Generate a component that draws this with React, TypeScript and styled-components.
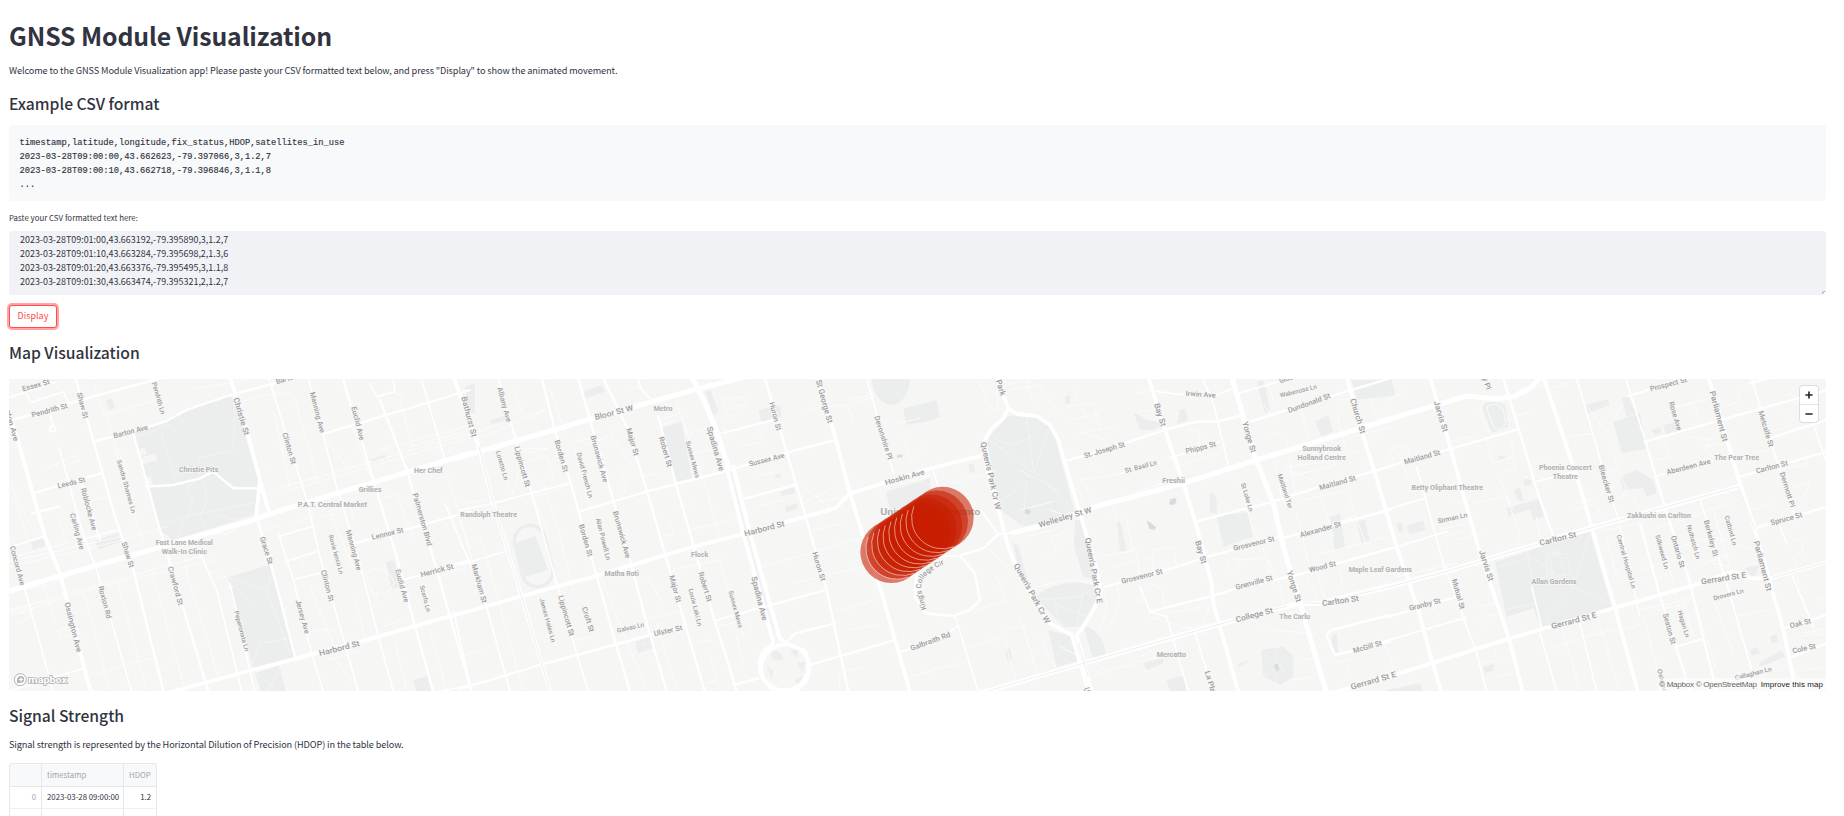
import React from "react";
import styled, { createGlobalStyle } from "styled-components";

const GlobalStyle = createGlobalStyle`
  * { box-sizing: border-box; }
  body {
    margin: 0;
    background: #fff;
    color: #31333f;
    font-family: "Noto Sans CJK SC", "Open Sans", sans-serif;
    overflow: hidden;
  }
`;

const Page = styled.main`
  height: 816px;
  padding: 17px 18px 0 9px;
  overflow: hidden;
`;

const Title = styled.h1`
  margin: 0;
  height: 36px;
  line-height: 36px;
  font-size: 24.8px;
  font-weight: 700;
  letter-spacing: -0.1px;
  white-space: nowrap;
`;

const Text = styled.p<{ $top: number }>`
  margin: ${(p) => p.$top}px 0 0;
  height: 17px;
  line-height: 17px;
  font-size: 9.2px;
  letter-spacing: -0.12px;
  white-space: nowrap;
`;

const Heading = styled.h3`
  margin: 13px 0 0;
  height: 22px;
  line-height: 24px;
  font-size: 15.7px;
  font-weight: 500;
  letter-spacing: -0.02px;
  white-space: nowrap;
`;

const CodeBlock = styled.pre`
  margin: 11px 0 0;
  height: 76px;
  padding: 11px 10.5px 0;
  border-radius: 3px;
  background: #f8f9fb;
  font: 8.74px/14px "Liberation Mono", monospace;
  -webkit-text-stroke: 0.15px #31333f;
`;

const FieldLabel = styled.label`
  display: block;
  margin-top: 8px;
  height: 17px;
  font-size: 7.9px;
  line-height: 17px;
`;

const CsvField = styled.div`
  position: relative;
  margin-top: 5px;
  height: 64px;
  padding: 2px 11px 0;
  border-radius: 3px;
  background: #f0f2f6;
  font-size: 8.95px;
  line-height: 14px;
  white-space: pre;
`;

const ResizeGrip = styled.i`
  position: absolute;
  right: 1px;
  bottom: 1px;
  width: 3px;
  height: 3px;
  background: linear-gradient(135deg, #d8d8d8 40%, #a8a8a8 40% 60%, #fff 60%);
`;

const DisplayButton = styled.button`
  display: block;
  margin-top: 10px;
  width: 48px;
  height: 23px;
  padding: 0 0 2px;
  border: 1px solid #ff4b4b;
  border-radius: 3px;
  background: #fff;
  box-shadow: 0 0 0 2px rgba(255, 75, 75, 0.5);
  color: #ff4b4b;
  font: 9px/19px "Noto Sans CJK SC", sans-serif;
`;

const MapFrame = styled.section`
  position: relative;
  margin-top: 16px;
  height: 312px;
  background: #f6f6f5;
  overflow: hidden;
`;

const MapCanvas = styled.svg`
  display: block;
  width: 1817px;
  height: 312px;
`;

const ZoomControl = styled.div`
  position: absolute;
  top: 7px;
  right: 8px;
  width: 18px;
  height: 36px;
  border-radius: 3px;
  background: #fff;
  box-shadow: 0 0 0 1px rgba(0, 0, 0, 0.1);
`;

const ZoomButton = styled.div<{ $divided?: boolean }>`
  display: flex;
  align-items: center;
  justify-content: center;
  height: 18px;
  border-top: ${(p) => (p.$divided ? "1px solid #e3e3e3" : "0")};
`;

const Attribution = styled.div`
  position: absolute;
  right: 0;
  bottom: 0;
  width: 168px;
  height: 13px;
  padding-right: 3px;
  display: flex;
  justify-content: flex-end;
  gap: 4px;
  background: rgba(255, 255, 255, 0.5);
  color: #666;
  font: 8px/13px "Liberation Sans", sans-serif;
  letter-spacing: -0.24px;
  white-space: nowrap;
`;

const Improve = styled.span`
  color: #222;
  letter-spacing: 0.06px;
`;

const Table = styled.div`
  display: grid;
  grid-template-columns: 32px 82px 32px;
  grid-template-rows: 23px 22px 22px;
  width: 148px;
  margin-top: 10px;
  border: 1px solid #e6e7ea;
  border-bottom: 0;
  border-radius: 3px 3px 0 0;
  overflow: hidden;
`;

const Cell = styled.div<{ $head?: boolean; $muted?: boolean; $right?: boolean; $last?: boolean }>`
  padding: 0 5px;
  border-right: ${(p) => (p.$last ? "0" : "1px solid #e6e7ea")};
  border-bottom: 1px solid ${(p) => (p.$head ? "#e6e7ea" : "#eff0f2")};
  background: ${(p) => (p.$head ? "#f8f9fb" : "#fff")};
  color: ${(p) => (p.$muted ? "#a3a5ad" : "#31333f")};
  font-size: 7.8px;
  line-height: ${(p) => (p.$head ? 22 : 20)}px;
  text-align: ${(p) => (p.$right ? "right" : "left")};
  white-space: nowrap;
`;

type Label = [string, number, number, number, number, number?];
type Tile = {
  parks: string;
  blocks?: string;
  lanes: string;
  minor: string;
  medium: string;
  major: string;
  wide: string;
  tracks?: string;
  trails?: string;
  labels: Label[];
  places: [string, number, number, number, number?][];
};

const tiles: Tile[] = [
  {
    parks:
      "M400 190L500 155L560 120L690 80L708 92L745 230L775 330L765 435L520 510L480 480ZM685 622L808 585L885 860L760 895ZM765 910L838 887L858 970H785ZM285 512L355 488L365 515L295 537ZM1158 577L1182 570L1205 648L1175 657ZM1240 930L1280 918L1295 965H1248ZM90 515L133 505L136 528L100 540ZM318 90L335 85L345 115L328 120ZM1110 270L1155 253L1158 264L1115 278Z",
    trails:
      "M405 200L470 180L500 160L540 190M485 190L530 340M595 265L700 240L705 90M440 350L520 345L600 325L640 305L700 350L775 355M595 265L600 325L560 350L580 400L530 500M600 325Q640 380 600 440L620 480M480 460L600 430L760 400M640 430L700 450L765 435M690 625L800 660L820 590M690 625L750 700M800 660L870 850M750 900L780 820L870 805M770 910L830 960M840 890L800 970",
    blocks: "M410 240l25-8 5 20-25 8zM415 265l50-15 8 20-50 15zM430 325l22-8 8 32-20 5z",
    lanes:
      "M30 720L600 560M30 735L300 650L640 570M840 355L1410 190M845 367L1410 203M30 575L360 500M30 590L350 515L500 470M40 560L280 500M30 330L85 510M100 480L35 350M130 300L230 255L238 272L205 280M175 445L205 530M250 395L325 380M325 380L345 430M280 40L380 310M340 220L430 525M320 135L470 90M585 55L740 30M700 100L820 70L880 70L950 320M820 120L870 350M770 300L800 285M850 350L950 320M980 210L1060 320M1060 175L1110 320M1140 240L1410 165M1230 230L1410 180M1180 60Q1215 80 1200 100L1240 230M990 430L1060 590M985 425L1050 405L1060 440M880 460L940 440L935 425M960 440L1020 430M890 480L870 460M900 560L908 590M1145 385L1190 375L1240 500M1095 610Q1150 570 1185 640L1160 670L1120 670ZM1115 710L1130 700L1130 670M930 650L1010 850M940 780L1000 780M1065 690L1100 820M1150 770L1230 740M1270 640L1300 740M1340 310L1410 540M1320 620L1400 590M250 660L330 960M350 625L440 960M455 600L555 960M555 590L655 920M610 610L660 600M630 635L675 620M650 670L700 650M30 725L110 700M45 760L100 740M60 730L100 715M130 640L165 760M175 780L220 765L240 790L180 805ZM75 660L180 635M270 915L470 860L490 960M770 490L830 470M680 490L710 475M650 490Q690 500 705 480M985 870L1075 845M1000 860L1075 965M1180 800L1220 960M1290 780L1340 960",
    minor:
      "M178 235L245 480L290 600L370 880L395 965M245 340L300 510M25 515L75 660L160 965M600 550L650 660L710 900L725 965M690 640L765 965M805 20L920 390L960 560L1000 700L1075 965M925 25L1010 350L1075 560L1135 800L1180 965M835 490L880 630L935 850L970 965M30 82L170 35M835 500L935 470M855 575L950 545M880 630L965 607M35 530L130 500M30 962L250 895M80 70L90 98L190 65L205 100M150 130L158 165M1320 965L1410 945M245 510L350 480M1110 40L1130 80L1185 65L1180 30M1265 30L1335 270",
    medium:
      "M225 20L345 440L400 600L490 965M30 152L270 82L480 25M285 213L400 185L495 155L560 120L690 75L900 20M105 368L305 310M400 190L480 480L510 580L625 965M1030 30L1120 330L1190 560L1245 770L1300 965M1140 90L1220 300L1290 530L1350 740L1415 965M770 440L815 590L885 860M975 190L1410 60M1065 520L1410 425M1210 630L1410 570M440 350L520 345L600 325L640 305L700 355L775 355M95 430L178 410",
    major: "M20 110L55 215L135 500L180 610L262 930L275 970M690 20L745 200L780 330L808 430M780 330L768 440M510 967L700 915L880 868L1080 815L1410 722",
    wide: "M0 672L180 618L760 450L830 425L1410 250",
    labels: [
      ["Essex St", 67, 57, 148, 34], ["Pendrith St", 95, 135, 202, 106], ["Shaw St", 238, 68, 258, 145],
      ["Pendrith Ln", 462, 37, 490, 132, 20], ["Barton Ave", 340, 197, 443, 171], ["Christie St", 708, 83, 741, 195, 24],
      ["Ossington Ave", 6, 55, 49, 213], ["Leeds St", 173, 348, 255, 328], ["Roblocke Ave", 250, 354, 284, 480],
      ["Carling Ave", 217, 430, 247, 538], ["Sandra Shames Ln", 357, 270, 402, 429, 19], ["Clinton St", 854, 188, 882, 282],
      ["Manning Ave", 937, 66, 968, 188], ["Euclid Ave", 1061, 110, 1087, 210], ["Barton Ave", 828, 35, 930, 5],
      ["Concord Ave", 37, 528, 68, 645], ["Shaw St", 372, 516, 396, 592], ["Crawford St", 511, 590, 543, 705],
      ["Roxton Rd", 302, 648, 328, 745], ["Ossington Ave", 201, 697, 238, 846, 23], ["Peperonata Ln", 709, 723, 741, 843, 19],
      ["Grace St", 787, 500, 812, 582], ["Jersey Ave", 894, 690, 922, 790], ["Clinton St", 970, 600, 995, 694],
      ["Rosie Ienco Ln", 992, 495, 1025, 612, 19], ["Manning Ave", 1045, 480, 1078, 600], ["Lennox St", 1115, 502, 1210, 479],
      ["Palmerston Blvd", 1245, 370, 1290, 527], ["Herrick St", 1262, 614, 1360, 588], ["Euclid Ave", 1193, 598, 1220, 696],
      ["Scarfo Ln", 1266, 646, 1286, 725, 19], ["Harbord St", 957, 850, 1078, 819, 24],
    ],
    places: [["Christie Pits", 596, 298, 118], ["Her Chef", 1285, 303, 86], ["Grillies", 1110, 358, 68], ["P.A.T. Central Market", 997, 405, 208], ["Fast Lane Medical", 553, 519, 172], ["Walk-In Clinic", 553, 546, 136]],
  },
  {
    parks:
      "M605 175L665 155L695 325L645 335ZM370 65L425 45L435 65L375 85ZM1235 27H1350Q1345 100 1290 105Q1240 90 1235 27ZM1330 115L1415 95V150L1340 165ZM895 120L930 112L960 105L965 140L905 160ZM735 65L752 60L775 125L760 135ZM960 365L1000 352L1005 370L965 378ZM975 410L1010 400L1015 415L980 427ZM1278 365L1410 325V400L1290 420ZM165 520L225 497L265 600L195 620ZM525 815L570 800L578 835L535 850ZM15 50L45 40L45 130L30 130ZM90 150L145 135L148 148L95 163ZM945 315l15-5 3 10-15 5zM930 850Q960 830 970 870L940 870ZM990 840L1015 835L1010 865ZM1010 880L1035 875L1030 910ZM920 890L940 900L935 930ZM1005 930L1030 915L1015 950Z",
    trails: "M535 825L575 815M550 805L560 842",
    blocks: "",
    lanes:
      "M45 210L260 120M40 190L115 165M195 235L260 235M205 250L300 225M205 275L260 258L280 320M235 220L230 180M250 340L300 500L340 660M160 180L195 250M210 380L260 370L325 345M215 370L265 490L255 550L285 640M340 230L430 540M370 230L420 210L470 180M340 215L390 205M480 300L500 350L490 380M455 200L520 290L500 310M540 320L600 310M600 500L640 490L630 460M595 150L660 130M605 165L650 150M650 100L740 360L780 510M690 190L770 165M700 250L790 230M650 410L690 400M690 480L810 450M640 600L780 570M560 620L610 700M570 745L660 725M590 760L650 960M700 820L750 810M735 940L770 930M750 850L780 960M850 890L830 800L875 780L860 750L770 770M780 580L850 800M790 90L850 80L860 100L800 120ZM790 140L840 130M760 210L800 200L790 170M890 320L960 300M890 410L970 390M840 230L910 215L890 170M900 640L880 660M905 590L960 575L1055 548L1200 505M1000 640L1290 570M1150 720L1240 690M1060 400L1150 380M1030 400L1130 350M1030 350L1120 420M1060 480L1150 460M1030 130L1060 115L1155 105Q1170 110 1180 150M1170 90L1240 70M1180 100L1240 80M1310 160L1400 140M1400 230L1350 270L1330 200M1320 340L1410 320M1240 650L1410 600M1140 965L1135 910L1210 890M1170 780L1250 765M1350 920L1410 905M180 290L160 370L140 330M20 400L80 390M0 450L110 820L150 960M120 710L190 960M240 690L290 830M400 800L350 810M0 860L60 840M420 620L560 960M60 500L120 700M270 60L320 200M500 60L540 50M160 60L190 140L260 120",
    minor:
      "M-45 400L45 620L80 710L150 965M115 25L170 220L215 370L290 640L350 850L385 965M0 585L140 543M1220 25L1300 310M530 20L545 60L575 90M-20 720L35 965M0 420L100 400L325 340",
    medium:
      "M915 25L975 230L1040 450L1100 660L1165 965M355 25L390 150L460 390L510 570L560 760L620 965M245 25L285 180L355 420L405 600L470 830L510 965M430 25L500 170L560 360L620 570L680 780L735 965M595 140L650 350L710 560L760 740L825 945M355 425L560 365L810 300L980 248L1125 210M0 957L240 885L570 795L680 765M785 190L940 150M845 388L1005 345M770 750L1095 660M985 812L1005 790L1125 760M1055 883L1300 812M820 945L895 925M1325 845L1410 820M825 945L830 965",
    major:
      "M1070 25L1120 180L1170 370L1210 500L1265 670L1350 965M-5 733L180 680L400 620L700 530L850 492L1125 415L1170 370L1410 297M-20 20L50 210L100 400L185 680L270 965M800 290L850 490L935 800M820 290L870 490L958 800M935 800Q950 825 915 840A74 74 0 1 0 1030 840Q960 820 953 790",
    wide: "M-10 265L400 145L700 60L850 22M695 20L735 100L765 170L805 290",
    tracks: "M57 230L100 400L185 680L270 965M812 310L860 490L940 780",
    labels: [
      ["Albany Ave", 119, 52, 148, 155], ["Bathurst St", 12, 80, 43, 200, 24], ["Lippincott St", 170, 230, 204, 350],
      ["Loretto Ln", 114, 243, 139, 330, 19], ["Borden St", 291, 210, 318, 306], ["David French Ln", 356, 248, 393, 383, 20],
      ["Brunswick Ave", 399, 197, 437, 336], ["Bloor St W", 404, 142, 519, 112, 24], ["Major St", 506, 175, 530, 256],
      ["Robert St", 604, 200, 630, 290], ["Sussex Mews", 684, 213, 713, 323, 19], ["Spadina Ave", 748, 170, 786, 302, 24],
      ["Huron St", 935, 96, 957, 181], ["St George St", 1075, 30, 1111, 158, 24], ["Devonshire Pl", 1250, 138, 1291, 268],
      ["Sussex Ave", 867, 282, 973, 255], ["Hoskin Ave", 1275, 338, 1393, 305], ["Harbord St", 853, 491, 973, 460, 24],
      ["Borden St", 364, 463, 391, 559], ["Alan Powell Ln", 414, 445, 446, 570, 20], ["Brunswick Ave", 466, 423, 505, 564],
      ["Markham St", 42, 582, 74, 698], ["Major St", 635, 616, 657, 697], ["Louie Laki Ln", 692, 656, 720, 768, 19],
      ["Robert St", 722, 606, 749, 694], ["Sussex Mews", 812, 662, 842, 773, 19], ["Spadina Ave", 882, 620, 915, 751, 24],
      ["Huron St", 1064, 546, 1090, 632], ["James Hales Ln", 245, 685, 281, 816, 19], ["Lippincott St", 302, 677, 336, 797],
      ["Croft St", 373, 711, 396, 785], ["Galvao Ln", 471, 782, 552, 763, 19], ["Ulster St", 582, 791, 666, 772],
      ["Galbraith Rd", 1352, 835, 1470, 792],
    ],
    places: [["Metro", 609, 116, 56], ["Randolph Theatre", 86, 433, 170], ["Flock", 719, 553, 52], ["Matha Roti", 485, 610, 103], ["University of Toronto", 1411, 425, 300, 29]],
  },
  {
    parks:
      "M260 140Q385 115 410 220L465 430L310 470L240 420L200 210ZM345 680Q430 615 528 650L530 690L480 770L430 770ZM465 450L485 450L525 630L490 620L462 530ZM385 780L460 800L490 870L410 890ZM490 765Q560 790 555 860L520 870ZM0 105L50 90L60 140L0 160ZM280 520L295 525L320 620L300 630ZM890 440L980 420L1000 500L910 530ZM1185 155L1225 135L1240 185L1205 200ZM1230 440L1260 430L1275 530L1245 540ZM1310 455L1335 450L1350 515L1325 520ZM870 370Q880 360 890 390V430H870ZM640 125L680 150L740 160L700 180H660ZM780 120l15-5 10 35-35 12zM590 455L600 455L620 540L600 545ZM1295 30H1410V75L1310 90ZM1025 840L1090 830L1120 860V920L1080 945L1030 920ZM1235 800L1250 790L1255 850L1240 855ZM255 840L270 835L277 870L263 873ZM670 880L730 865V880L680 900ZM435 80L450 75V100L437 103ZM1010 35L1030 30L1050 120L1035 130ZM740 930L795 915L800 965H750ZM145 285l15-5 5 25-15 5zM955 880l40-10-40 20z",
    trails:
      "M320 140L340 300L460 420M390 170L340 310L210 210M310 470L320 335L235 400M340 320L410 360M220 200Q280 260 380 160M400 690L420 760M350 690L480 680L530 650M490 660L470 770M405 700L500 740M1030 850L1115 920M1120 860L1030 920M1070 830V945M380 560L440 500",
    blocks: "",
    lanes:
      "M0 330L40 310M100 340L230 300M195 85Q200 120 235 115L230 60L300 30M210 90L190 60L170 30M320 30L340 100M350 40L410 120M270 60L360 45M440 110L520 100L540 180M450 150L540 130M470 190L590 170M460 60L500 140M300 420L400 395M390 490L410 540M395 500L450 480M310 500L400 480M500 190L560 210M510 270L545 310M490 330L600 310M460 300L520 380M580 410L590 450L560 440M650 70L720 60M640 130L690 120M460 350Q490 370 485 400M580 590L700 560M540 560L650 540L660 620M700 540L760 530L770 590L700 600ZM690 640Q740 650 730 700M650 690L680 690M590 640Q610 700 570 770M545 640Q580 720 530 790M565 680L590 700M610 550L640 540L620 450M640 370L720 340M700 350L760 330M800 180Q860 170 830 240L850 260M820 230L890 220M770 290L900 250M1050 200Q1070 170 1100 210L1125 370L1090 400L1060 260M960 330L1000 490M950 430L1000 420M1090 290L1190 280L1330 240M1100 300L1180 330M1100 320L1240 290L1250 240M1150 390L1280 360M1200 370L1240 500M1290 390L1340 530M1200 550L1250 540L1400 500M1250 570L1270 650M1130 430L1170 600M1000 470L1080 650L1090 700M920 580L950 560L960 590L930 600ZM940 570L1040 565L1050 610M1190 610L1220 700M1160 620L1190 680M1210 690L1410 640M850 760L870 700M690 740L860 790M780 780L870 760M740 730L850 710M0 910L120 880M150 830L250 800L290 940M250 780L310 770L340 880M230 620L260 690L170 720M300 740L350 900M300 680Q320 650 450 630Q500 630 540 650M980 740L1050 780L1190 790M1150 870L1200 860M1240 880L1290 870L1280 910M1120 930L1180 920M660 860L700 840M300 300L330 320M1030 100L1060 150M1140 110L1180 240M1260 90L1310 80M1040 30L1060 90M200 530L260 590M420 830L560 900M540 910L750 850M1350 90L1390 190M1250 130L1280 250M1300 200L1410 170M1240 460L1300 440M700 150L730 130M390 420L450 440M360 800L420 920",
    minor:
      "M235 493L185 425L100 410M0 575L60 560L120 557M40 300L60 370M105 738L175 965M-30 830L80 792L110 770M710 65L800 75L890 75L940 55M600 310L720 280M750 265L900 215M850 30L880 100L925 285M660 650L690 725L740 740L805 965M825 790L880 965M955 70L1100 28L1200 5",
    medium:
      "M120 557L190 535L235 493L280 488M120 557L165 610L180 690L150 720L100 738L15 730L-15 680L-10 600M440 272L620 218L740 178L830 155L890 155L960 138M975 160L1260 70L1410 25M825 455L1060 395L1200 350L1410 290M1085 505L1410 420M555 650L730 603L865 560L1080 500M690 725L870 680L950 655L1150 610L1410 535M1410 735L1235 780Q1215 790 1225 810L1245 855L1410 815",
    major:
      "M215 -20L265 115L290 132L350 138L390 165L415 210L435 280L480 430L530 600L543 670L520 720L490 770L470 795L515 965M265 115L250 145L215 175L195 210L200 290L235 420L265 530L300 620L390 760L455 795L505 965M685 20L735 180L790 340L830 470L875 640L880 700L955 965M1280 20L1330 200L1365 310L1415 480M0 303L180 258M1230 970L1410 918",
    wide: "M935 20L1005 260L1060 400L1090 530L1140 700L1220 970M280 488L350 472L520 412L790 340L1010 270L1410 148M180 970L490 880L890 765L1140 700L1200 700L1410 650",
    tracks: "M180 970L490 880L890 765L1100 708M1150 697L1200 700L1410 650M475 820L505 920",
    labels: [
      ["Park", 235, 30, 250, 76, 24], ["Queen's Park Cr W", 190, 216, 235, 418, 24], ["Queen's Park Cr W", 288, 582, 385, 758, 24],
      ["Queen's Park Cr E", 503, 503, 540, 700, 24], ["Wellesley St W", 356, 465, 514, 418, 24], ["St. Joseph St", 492, 257, 614, 222],
      ["St. Basil Ln", 615, 302, 710, 277, 20], ["Bay St", 710, 100, 731, 168, 24], ["Irwin Ave", 797, 70, 887, 76, 21],
      ["Phipps St", 797, 244, 887, 221], ["Yonge St", 975, 155, 1001, 247, 24], ["Wabenose Ln", 1080, 76, 1190, 49, 19],
      ["Dundonald St", 1104, 122, 1230, 76], ["Church St", 1298, 86, 1330, 190, 24], ["St Luke Ln", 969, 339, 994, 424, 19],
      ["Maitland Ter", 1079, 312, 1112, 415, 19], ["Maitland St", 1198, 353, 1306, 323], ["Alexander St", 1140, 495, 1262, 461],
      ["Grosvenor St", 940, 535, 1063, 505], ["Grosvenor St", 604, 634, 727, 603], ["Bay St", 833, 512, 853, 580, 24],
      ["Wood St", 1167, 600, 1247, 580], ["Grenville St", 947, 652, 1057, 622], ["Yonge St", 1108, 603, 1137, 695, 24],
      ["College St", 947, 749, 1058, 720, 24], ["Carlton St", 1206, 700, 1316, 684, 24], ["McGill St", 1299, 842, 1385, 818],
      ["La Plante", 862, 903, 890, 1000], ["Gerrard St E", 1292, 951, 1428, 912, 24], ["Univ", 499, 953, 510, 990, 24],
      ["Gloucester", 1078, 32, 1170, 6],
    ],
    places: [["Freshii", 761, 331, 68], ["Sunnybrook", 1205, 235, 117], ["Holland Centre", 1205, 262, 145], ["Maple Leaf Gardens", 1381, 599, 190], ["The Carlu", 1124, 740, 92], ["Mercatto", 754, 853, 88]],
  },
  {
    parks:
      "M0 27H35L45 75L0 85ZM305 105Q340 85 375 105L385 170L335 190ZM700 155L780 130L800 235L725 250ZM725 85L745 80L768 130L740 140ZM615 105L685 88L688 105L625 130ZM720 320L770 300L820 330L830 370L800 380L790 355L730 360ZM380 415L480 385L490 440L460 450L450 420L385 437ZM345 575L630 485L695 710L485 775L455 700L460 715L380 740ZM80 465L130 452L135 480L88 493ZM815 180l25-7 5 15-20 8zM850 165l35-8 25 30-50 10zM1095 595l45-10-20 40zM1110 840l20-10 10 20-25 8zM1135 880L1205 840L1215 860L1145 890ZM1170 800l20-8 5 25-20 3zM310 890l30-8v20l-25 8zM430 330l20-8 5 20-20 8zM400 360l20-8 10 40-15 0zM355 260l20-6v10l-18 6zM20 960L120 940L130 970H20ZM50 460l15-3 5 25-15 4z",
    trails:
      "M360 590L455 560L520 610L580 650L690 700M500 540L520 610L450 640M630 495L580 650L500 750M440 540L460 640M380 720L460 700M540 560L560 640M500 560L560 550L575 610L505 625ZM440 420V445",
    blocks: "",
    lanes:
      "M20 240L80 225L90 260M30 240L45 290M40 215L100 360L130 350M215 215L270 200L280 215M320 210L340 280L400 260L395 210M310 90L300 130L330 190M320 110Q350 90 370 120L378 160Q360 190 340 170ZM380 150L460 120M500 60L560 40M540 100Q560 80 560 110M620 110L700 210M570 200L640 190M460 60L500 40M400 270L410 300L380 300M460 330L430 320M285 400L370 380M220 400L270 380M180 480L260 460M190 500L250 485M230 510L300 490M300 710L350 700L360 730L310 740M300 760L320 780M210 860L310 830M340 830L350 870L310 880M350 920L400 910M500 840L620 800L700 780M550 790L600 960M660 770L720 960M780 720L860 700M790 740L850 965M670 480L780 460M680 500L710 620Q730 600 700 600M580 420L650 400L660 430M590 400L640 385M650 320L710 300M700 250L740 360M730 100L700 150M760 380L790 460M740 370L700 390M860 120L960 90M850 210L870 260L830 270M930 200L990 210L975 240L1010 270M900 110L1010 80M1070 60L1080 90L1040 110M1150 190L1230 170L1210 130M1240 110L1260 90L1230 70M1180 200L1260 170M1120 250L1170 240M1090 360L1120 420L1180 400M1200 300L1280 280L1285 250M1240 350L1290 340L1270 380M1150 480L1180 460M1230 520Q1260 490 1270 540L1240 560L1250 600M1250 610L1260 660M1310 700Q1325 670 1340 700M1270 790L1340 775M1260 800L1340 790M1070 740L1160 720M1040 650L1070 740L1080 800M940 680L1010 900M1000 690L1060 850M970 580L1060 550M900 530L1000 500L1120 540M820 480L960 430L1050 400M1000 420L1040 560L1060 620M860 560L880 640M790 600L840 580M800 630L870 610M840 710L940 680M830 720L930 700M905 680L940 800M880 650L900 720M940 100L960 150M970 230L1030 220M960 950L1000 965M1080 930L1230 880L1270 960M1280 900L1340 890M0 800L30 860L40 900M50 620L230 580M140 700L180 740M30 90L80 60M520 550Q530 540 540 550M410 530Q430 480 400 440L380 380M360 330L400 420M470 440L480 500M730 780L790 760M1000 580L1050 590",
    minor:
      "M110 290L190 580L290 850L320 965M480 790L530 965M600 760L650 965M735 20L800 225M590 25L690 370L720 460M960 390L1040 640L1115 900M1115 27L1180 240L1245 440M0 425L140 383M20 540L200 485M0 818L260 742M890 830L965 808M825 320L1000 270M455 650L485 770M470 335L600 300M1230 600L1300 770M1200 470L1220 520M720 470L780 740M1300 160L1340 280",
    medium:
      "M370 25L420 190L480 390L520 500M800 225L860 430L925 620L1010 965M780 460L835 660L930 965M0 297L415 178M20 742L240 678M1080 320L1340 245M800 225L795 215L1340 60M1125 475L1340 410M1170 205L1340 150M745 78L930 22M1210 775L1340 735M1225 865L1340 820M1110 40L1180 20",
    major:
      "M0 360L50 530L115 720L155 870L185 970M150 20L210 230L300 550L385 800L430 970M490 20L600 350L705 715L775 970M985 20L1080 340L1125 480L1205 760L1250 970M-20 935L160 878L390 805L700 715L960 640L1060 605L1110 625L1170 625L1345 575",
    wide: "M0 155L260 78L350 87L400 80L450 55L490 15M0 658L215 600L480 520L630 475L860 410L1075 350",
    tracks: "M0 658L215 600L480 520L630 475L860 410L1075 350L1125 480M1180 622L1345 575",
    labels: [
      ["Jarvis St", 169, 93, 197, 185, 24], ["Jarvis St", 305, 541, 334, 632, 24], ["Maitland St", 72, 276, 180, 246],
      ["Huntley Pl", 293, -42, 327, 58], ["Bleecker St", 663, 285, 696, 397], ["Prospect St", 810, 57, 920, 28],
      ["Rose Ave", 874, 95, 899, 181], ["Parliament St", 997, 63, 1036, 214, 24], ["Metcalfe St", 1142, 123, 1174, 230],
      ["Aberdeen Ave", 860, 307, 991, 273], ["Carlton St", 1128, 303, 1223, 278], ["Dermott Pl", 1206, 307, 1239, 411, 21],
      ["Spruce St", 1172, 458, 1266, 433], ["Carlton St", 479, 519, 588, 492, 24], ["Sirman Ln", 173, 454, 261, 434, 20],
      ["Central Hospital Ln", 716, 495, 762, 655, 19], ["Silkweed Ln", 832, 495, 861, 597, 19], ["Ontario St", 880, 497, 908, 592],
      ["Nuthatch Ln", 927, 465, 955, 567, 19], ["Berkeley St", 979, 450, 1008, 559], ["Catbird Ln", 1040, 437, 1065, 526, 19],
      ["Parliament St", 1129, 513, 1168, 662, 24], ["Gerrard St E", 963, 635, 1098, 614, 24], ["Gerrard St E", 514, 769, 649, 734, 24],
      ["Drovers Ln", 1000, 685, 1090, 661, 19], ["Mutual St", 223, 627, 248, 717], ["Granby St", 87, 715, 181, 691],
      ["Seaton St", 856, 731, 881, 822], ["Hagan Ln", 899, 722, 923, 801, 19], ["Oak St", 1230, 767, 1292, 752],
      ["Cole St", 1237, 843, 1307, 827], ["Callaghan Ln", 1065, 924, 1174, 896, 19], ["Oskenonton", 838, 897, 867, 1010, 19],
    ],
    places: [["Betty Oliphant Theatre", 202, 353, 215], ["Phoenix Concert", 556, 294, 158], ["Theatre", 556, 321, 75], ["Zakkushi on Carlton", 837, 436, 192], ["The Pear Tree", 1070, 264, 134], ["Allan Gardens", 522, 634, 135]],
  },
];

const RoadPath = styled.path<{ $w: number; $c?: string }>`
  fill: none;
  stroke: ${(p) => p.$c ?? "#fff"};
  stroke-width: ${(p) => p.$w};
  stroke-linejoin: round;
  stroke-linecap: round;
`;

const StreetText = styled.text<{ $size: number }>`
  font: 500 ${(p) => p.$size}px Roboto, sans-serif;
  fill: #9d9d9d;
  stroke: #f8f8f7;
  stroke-width: 4px;
  stroke-linejoin: round;
  paint-order: stroke;
`;

const PlaceText = styled(StreetText)`
  font-weight: 700;
  fill: #b0b0b0;
  text-anchor: middle;
`;

const at = (i: number) => `translate(${i * 1380} 0)`;

const R = 93;
const track = Array.from({ length: 10 }, (_, i) => ({
  x: 2674 + i * 17.1,
  y: 546 - i * 11.4,
}));

function StreetLabel({ label }: { label: Label }) {
  const [name, x1, y1, x2, y2, size = 22] = label;
  const angle = (Math.atan2(y2 - y1, x2 - x1) * 180) / Math.PI;
  return (
    <StreetText
      $size={size}
      transform={`translate(${x1} ${y1}) rotate(${angle})`}
      y={size * 0.35}
      textLength={Math.hypot(x2 - x1, y2 - y1)}
      lengthAdjust="spacingAndGlyphs"
    >
      {name}
    </StreetText>
  );
}

function CityMap() {
  return (
    <MapCanvas viewBox="27 27 5451 936" preserveAspectRatio="none">
      <defs>
        <path id="college-circle" d="M2780 717Q2756 655 2768 630Q2790 596 2850 576" />
      </defs>
      {tiles.map((t, i) => (
        <g key={i} transform={at(i)}>
          <path d={t.parks} fill="#ebeeed" />
          <path d={t.blocks} fill="#f6f6f5" />
          <RoadPath d={t.trails} $w={2} $c="#f6f7f6" />
          <RoadPath d={t.lanes} $w={2.6} $c="#fdfdfd" />
        </g>
      ))}
      <g fill="none" stroke="#ebeeed" strokeWidth="10">
        <rect x="1555" y="465" width="92" height="186" rx="45" transform="rotate(-14 1601 558)" />
      </g>
      <g fill="#d5dddd">
        <path d="M3075 418l12-2 6 10-8 8-12-4zM3510 388l16-4 4 12-10 10-12-4zM3440 452l12 6 16 14-4 8-16-4zM3822 886l10-6 6 18-8 8zM2690 256l16-3 2 8-16 3z" />
      </g>
      {tiles.map((t, i) => (
        <g key={i} transform={at(i)}>
          <RoadPath d={t.minor} $w={5} />
          <RoadPath d={t.medium} $w={7} />
          <RoadPath d={t.major} $w={11.5} />
          <RoadPath d={t.wide} $w={15.5} />
          {t.tracks && <RoadPath d={t.tracks} $w={3} $c="#edf0ef" />}
        </g>
      ))}
      <circle cx="158" cy="176" r="8" fill="none" stroke="#fff" strokeWidth="6" />
      <circle cx="2356" cy="895" r="72" fill="none" stroke="#fff" strokeWidth="11" />
      {tiles.map((t, i) => (
        <g key={i} transform={at(i)}>
          {t.labels.map((l, k) => (
            <StreetLabel key={k} label={l} />
          ))}
          {t.places.map(([name, x, y, w, size = 21]) => (
            <PlaceText key={name} $size={size} x={x} y={y + size * 0.35} textLength={w} lengthAdjust="spacingAndGlyphs">
              {name}
            </PlaceText>
          ))}
        </g>
      ))}
      <StreetText $size={22}>
        <textPath href="#college-circle">King's College Cir</textPath>
      </StreetText>
      {track.map((p, i) => (
        <circle key={i} cx={p.x} cy={p.y} r={R} fill="rgb(200,30,0)" fillOpacity="0.58" />
      ))}
      {track.slice(1).map((p, i) => (
        <path
          key={i}
          d={`M${p.x - R * 0.93} ${p.y - R * 0.37}A${R} ${R} 0 0 0 ${p.x + R * 0.37} ${p.y + R * 0.93}`}
          fill="none"
          stroke="#fff"
          strokeOpacity="0.65"
          strokeWidth="2.4"
        />
      ))}
      <g>
        <circle cx="61" cy="929" r="18" fill="#fff" stroke="#b5b5b5" strokeWidth="3" />
        <path d="M51 939q-3-20 11-21a10 10 0 1 1 1 20q-6 2-12 1z" fill="#b5b5b5" />
        <path d="M63 921l2.5 5 5 2.5-5 2.5-2.5 5-2.5-5-5-2.5 5-2.5z" fill="#fff" />
        <text
          x="85"
          y="938"
          textLength="116"
          lengthAdjust="spacingAndGlyphs"
          fontFamily="Roboto, sans-serif"
          fontWeight="700"
          fontSize="29"
          fill="#fff"
          stroke="#b0b0b0"
          strokeWidth="4.5"
          paintOrder="stroke"
        >
          mapbox
        </text>
      </g>
    </MapCanvas>
  );
}

export default function App() {
  return (
    <>
      <GlobalStyle />
      <Page>
        <Title>GNSS Module Visualization</Title>
        <Text $top={9}>
          Welcome to the GNSS Module Visualization app! Please paste your CSV formatted text below, and press "Display" to show the
          animated movement.
        </Text>
        <Heading>Example CSV format</Heading>
        <CodeBlock>
          {`timestamp,latitude,longitude,fix_status,HDOP,satellites_in_use
2023-03-28T09:00:00,43.662623,-79.397066,3,1.2,7
2023-03-28T09:00:10,43.662718,-79.396846,3,1.1,8
...`}
        </CodeBlock>
        <FieldLabel>Paste your CSV formatted text here:</FieldLabel>
        <CsvField>
          {`2023-03-28T09:01:00,43.663192,-79.395890,3,1.2,7
2023-03-28T09:01:10,43.663284,-79.395698,2,1.3,6
2023-03-28T09:01:20,43.663376,-79.395495,3,1.1,8
2023-03-28T09:01:30,43.663474,-79.395321,2,1.2,7`}
          <ResizeGrip />
        </CsvField>
        <DisplayButton>Display</DisplayButton>
        <Heading>Map Visualization</Heading>
        <MapFrame>
          <CityMap />
          <ZoomControl>
            <ZoomButton>
              <svg width="8" height="8" viewBox="0 0 8 8" stroke="#222" strokeWidth="1.6" strokeLinecap="round">
                <path d="M1 4H7M4 1V7" />
              </svg>
            </ZoomButton>
            <ZoomButton $divided>
              <svg width="8" height="8" viewBox="0 0 8 8" stroke="#222" strokeWidth="1.6" strokeLinecap="round">
                <path d="M1 4H7" />
              </svg>
            </ZoomButton>
          </ZoomControl>
          <Attribution>
            <span>© Mapbox © OpenStreetMap</span>
            <Improve>Improve this map</Improve>
          </Attribution>
        </MapFrame>
        <Heading>Signal Strength</Heading>
        <Text $top={10}>Signal strength is represented by the Horizontal Dilution of Precision (HDOP) in the table below.</Text>
        <Table>
          <Cell $head $muted />
          <Cell $head $muted>timestamp</Cell>
          <Cell $head $muted $last>HDOP</Cell>
          <Cell $muted $right>0</Cell>
          <Cell>2023-03-28 09:00:00</Cell>
          <Cell $right $last>1.2</Cell>
          <Cell />
          <Cell />
          <Cell $last />
        </Table>
      </Page>
    </>
  );
}
